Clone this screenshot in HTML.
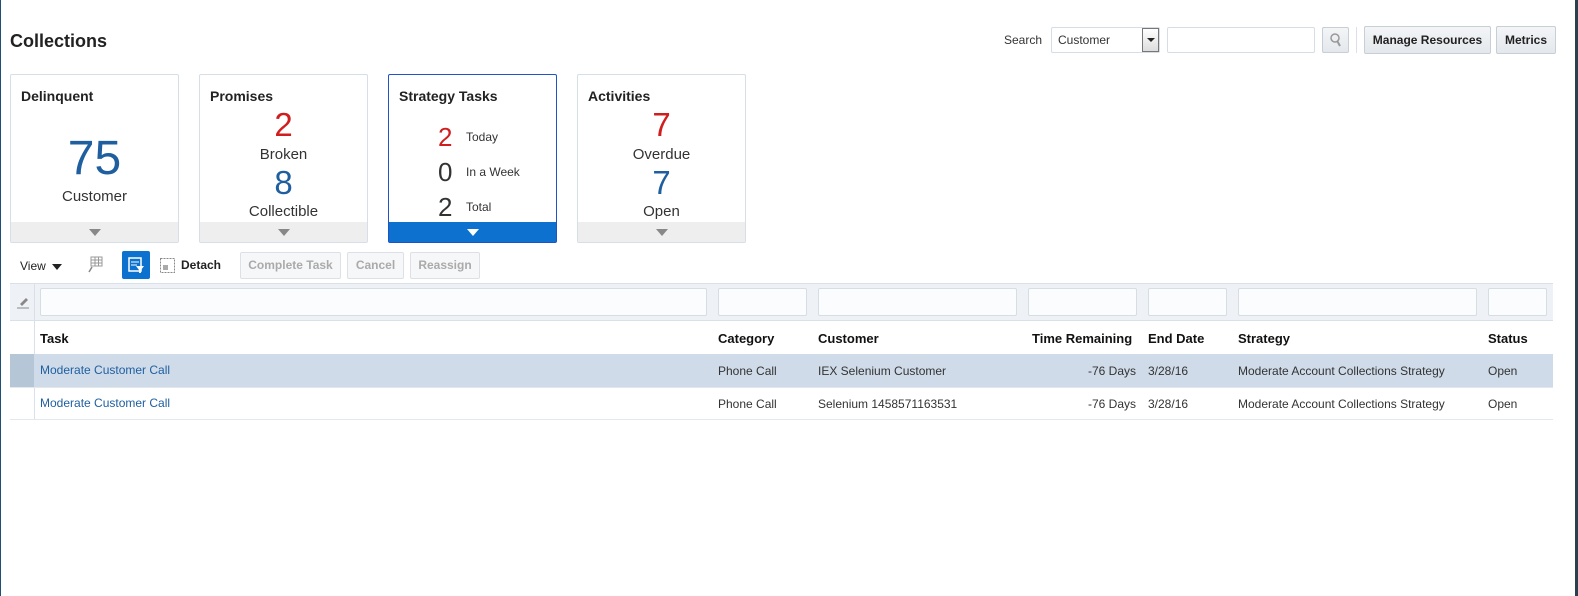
<!DOCTYPE html>
<html><head><style>
*{box-sizing:border-box;margin:0;padding:0}
body{width:1578px;height:596px;background:#fff;font-family:"Liberation Sans",Arial,sans-serif;color:#333;position:relative;overflow:hidden}
.a{position:absolute}
.lb{left:0;top:0;width:1px;height:596px;background:#1f4e79}
.rb{right:0;top:0;width:3px;height:596px;background:#2d3e50}
h1{position:absolute;left:10px;top:31px;font-size:18px;font-weight:bold;color:#222}
.card{position:absolute;top:74px;width:169px;height:169px;border:1px solid #d6dfe6;border-radius:2px;background:#fff}
.card .t{position:absolute;left:10px;top:13px;font-size:14px;font-weight:bold;color:#222}
.card .f{position:absolute;left:0;right:0;bottom:0;height:20px;background:#eeeeee}
.tri{position:absolute;left:50%;top:7px;margin-left:-6px;width:0;height:0;border-left:6px solid transparent;border-right:6px solid transparent;border-top:7px solid #888}
.c{position:absolute;left:0;right:0;text-align:center}
.red{color:#d01d1d}.blue{color:#1f5fa0}
.btn{position:absolute;height:26px;border:1px solid #c7ced5;border-radius:2px;background:linear-gradient(#f3f5f7,#e4e8ec);font-size:12px;font-weight:bold;color:#222;text-align:center;line-height:24px}
.dis{color:#aaa;background:#f6f7f8;border-color:#dde1e5;font-weight:bold}
.in{position:absolute;border:1px solid #d6dde3;border-radius:2px;background:#fbfcfd}
.cell{position:absolute;font-size:12px;white-space:nowrap}
.hd{font-weight:bold;font-size:13px;color:#111}
</style></head><body>
<div class="a lb"></div><div class="a rb"></div>
<h1>Collections</h1>
<div class="cell" style="left:1004px;top:33px;color:#333">Search</div>
<div class="in" style="left:1051px;top:27px;width:109px;height:26px;background:#fff"></div>
<div class="cell" style="left:1058px;top:33px;color:#333">Customer</div>
<div class="a" style="left:1142px;top:28px;width:17px;height:24px;border:1px solid #777;background:linear-gradient(#fff,#ddd)"><div class="a" style="left:4px;top:9px;border-left:4px solid transparent;border-right:4px solid transparent;border-top:4px solid #222"></div></div>
<div class="in" style="left:1167px;top:27px;width:148px;height:26px;background:#fff"></div>
<div class="btn" style="left:1322px;top:27px;width:27px;height:26px"><svg width="14" height="16" style="margin-top:4px" viewBox="0 0 14 16"><circle cx="6" cy="6" r="4" fill="none" stroke="#999" stroke-width="1.5"/><line x1="8.5" y1="9.5" x2="11" y2="14" stroke="#999" stroke-width="2"/></svg></div>
<div class="a" style="left:1356px;top:27px;width:1px;height:26px;background:#dde"></div>
<div class="btn" style="left:1364px;top:26px;width:127px;height:28px;line-height:26px">Manage Resources</div>
<div class="btn" style="left:1496px;top:26px;width:60px;height:28px;line-height:26px">Metrics</div>

<div class="card" style="left:10px"><div class="t">Delinquent</div>
<div class="c blue" style="top:56px;font-size:48px">75</div>
<div class="c" style="top:113px;font-size:15px">Customer</div>
<div class="f"><div class="tri"></div></div></div>

<div class="card" style="left:199px"><div class="t">Promises</div>
<div class="c red" style="top:31px;font-size:33px">2</div>
<div class="c" style="top:71px;font-size:15px">Broken</div>
<div class="c blue" style="top:89px;font-size:33px">8</div>
<div class="c" style="top:128px;font-size:15px">Collectible</div>
<div class="f"><div class="tri"></div></div></div>

<div class="card" style="left:388px;border-color:#2152c7"><div class="t">Strategy Tasks</div>
<div class="a red" style="left:49px;top:47px;font-size:26px">2</div><div class="a" style="left:77px;top:55px;font-size:12px">Today</div>
<div class="a" style="left:49px;top:82px;font-size:26px;color:#333">0</div><div class="a" style="left:77px;top:90px;font-size:12px">In a Week</div>
<div class="a" style="left:49px;top:117px;font-size:26px;color:#333">2</div><div class="a" style="left:77px;top:125px;font-size:12px">Total</div>
<div class="f" style="background:#0d72cf"><div class="tri" style="border-top-color:#fff"></div></div></div>

<div class="card" style="left:577px"><div class="t">Activities</div>
<div class="c red" style="top:31px;font-size:33px">7</div>
<div class="c" style="top:71px;font-size:15px">Overdue</div>
<div class="c blue" style="top:89px;font-size:33px">7</div>
<div class="c" style="top:128px;font-size:15px">Open</div>
<div class="f"><div class="tri"></div></div></div>

<div class="cell" style="left:20px;top:259px;color:#222">View</div>
<div class="a" style="left:52px;top:264px;border-left:5px solid transparent;border-right:5px solid transparent;border-top:6px solid #222"></div>
<svg class="a" style="left:86px;top:256px" width="18" height="18" viewBox="0 0 18 18"><rect x="5" y="1" width="11" height="9" fill="none" stroke="#999"/><line x1="5" y1="4" x2="16" y2="4" stroke="#999"/><line x1="5" y1="7" x2="16" y2="7" stroke="#999"/><line x1="9" y1="1" x2="9" y2="10" stroke="#999"/><line x1="12.5" y1="1" x2="12.5" y2="10" stroke="#999"/><path d="M6 11 L3 16" stroke="#888" stroke-width="1.5"/></svg>
<div class="a" style="left:122px;top:251px;width:28px;height:28px;background:#0d72cf;border-radius:2px"><svg width="28" height="28" viewBox="0 0 28 28"><rect x="7" y="7" width="12" height="13" fill="none" stroke="#fff" stroke-width="1.5"/><line x1="9" y1="11" x2="17" y2="11" stroke="#fff"/><line x1="9" y1="14" x2="15" y2="14" stroke="#fff"/><path d="M14 15 L22 15 L19 19 L19 22 L17 22 L17 19 Z" fill="#fff"/></svg></div>
<svg class="a" style="left:160px;top:258px" width="15" height="15" viewBox="0 0 15 15"><rect x="0.5" y="0.5" width="14" height="14" fill="none" stroke="#888" stroke-dasharray="2 1"/><rect x="3" y="7" width="5" height="5" fill="#aaa"/></svg>
<div class="cell" style="left:181px;top:258px;font-weight:bold;color:#222">Detach</div>
<div class="btn dis" style="left:240px;top:252px;width:101px;height:27px">Complete Task</div>
<div class="btn dis" style="left:347px;top:252px;width:57px;height:27px">Cancel</div>
<div class="btn dis" style="left:410px;top:252px;width:70px;height:27px">Reassign</div>

<div class="a" style="left:10px;top:283px;width:1543px;height:38px;background:#eef2f6;border-top:1px solid #d9e1e8;border-bottom:1px solid #d9e1e8"></div>
<svg class="a" style="left:16px;top:295px" width="14" height="14" viewBox="0 0 14 14"><path d="M4 9 L10 3 L12 5 L6 11 Z" fill="#888"/><line x1="1" y1="13" x2="13" y2="13" stroke="#888"/></svg>
<div class="a" style="left:34px;top:283px;width:1px;height:137px;background:#d9e1e8"></div>
<div class="in" style="left:40px;top:288px;width:667px;height:28px"></div>
<div class="in" style="left:718px;top:288px;width:89px;height:28px"></div>
<div class="in" style="left:818px;top:288px;width:199px;height:28px"></div>
<div class="in" style="left:1028px;top:288px;width:109px;height:28px"></div>
<div class="in" style="left:1148px;top:288px;width:79px;height:28px"></div>
<div class="in" style="left:1238px;top:288px;width:239px;height:28px"></div>
<div class="in" style="left:1488px;top:288px;width:59px;height:28px"></div>

<div class="cell hd" style="left:40px;top:331px">Task</div>
<div class="cell hd" style="left:718px;top:331px">Category</div>
<div class="cell hd" style="left:818px;top:331px">Customer</div>
<div class="cell hd" style="left:1032px;top:331px">Time Remaining</div>
<div class="cell hd" style="left:1148px;top:331px">End Date</div>
<div class="cell hd" style="left:1238px;top:331px">Strategy</div>
<div class="cell hd" style="left:1488px;top:331px">Status</div>

<div class="a" style="left:10px;top:354px;width:1543px;height:33px;background:#cfdbe9"></div>
<div class="a" style="left:10px;top:354px;width:24px;height:33px;background:#b5c7d6"></div>
<div class="a" style="left:10px;top:419px;width:1543px;height:1px;background:#e3e8ec"></div>
<div class="a" style="left:10px;top:387px;width:1543px;height:1px;background:#e3e8ec"></div>

<div class="cell" style="left:40px;top:363px;color:#1f5fa0">Moderate Customer Call</div>
<div class="cell" style="left:718px;top:364px">Phone Call</div>
<div class="cell" style="left:818px;top:364px">IEX Selenium Customer</div>
<div class="cell" style="left:1088px;top:364px">-76 Days</div>
<div class="cell" style="left:1148px;top:364px">3/28/16</div>
<div class="cell" style="left:1238px;top:364px">Moderate Account Collections Strategy</div>
<div class="cell" style="left:1488px;top:364px">Open</div>

<div class="cell" style="left:40px;top:396px;color:#1f5fa0">Moderate Customer Call</div>
<div class="cell" style="left:718px;top:397px">Phone Call</div>
<div class="cell" style="left:818px;top:397px">Selenium 1458571163531</div>
<div class="cell" style="left:1088px;top:397px">-76 Days</div>
<div class="cell" style="left:1148px;top:397px">3/28/16</div>
<div class="cell" style="left:1238px;top:397px">Moderate Account Collections Strategy</div>
<div class="cell" style="left:1488px;top:397px">Open</div>
</body></html>
